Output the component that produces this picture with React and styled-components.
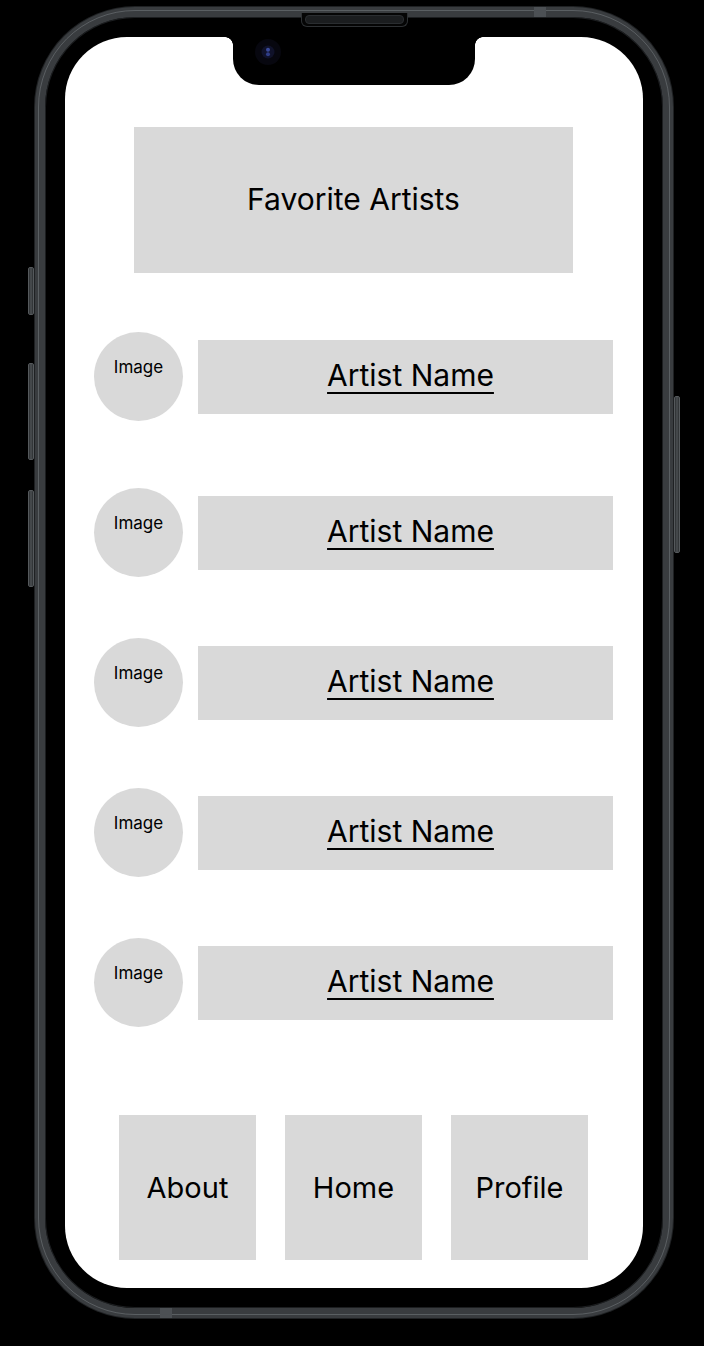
import React from 'react';
import styled, { createGlobalStyle } from 'styled-components';

const GlobalStyle = createGlobalStyle`
  html, body {
    margin: 0;
    padding: 0;
    background: #000;
  }
  * {
    box-sizing: border-box;
  }
  body {
    font-family: Inter, "Noto Sans", "Liberation Sans", sans-serif;
    color: #000;
  }
`;

const Page = styled.div`
  width: 704px;
  height: 1346px;
  background: #000;
  padding: 7px 0 0 35px;
  overflow: hidden;
`;

const Phone = styled.div`
  position: relative;
  width: 638px;
  height: 1311px;
  border: 10px solid #393c3f;
  border-radius: 100px;
  padding: 20px;
  background: #000;
  box-shadow: 0 0 0 1px #1f2123, inset 0 0 0 1px #1c1e20;

  &::before {
    content: '';
    position: absolute;
    inset: -7px;
    border-radius: 97px;
    border: 1.5px solid rgba(118, 123, 128, 0.55);
    pointer-events: none;
  }
`;

const SideButton = styled.div`
  position: absolute;
  width: 6px;
  border-radius: 2px;
  background: linear-gradient(90deg, #2a2d2f, #4d5154 50%, #2a2d2f);
  border: 1px solid #55595c;
  left: ${(p) => (p.$right ? '629px' : '-17px')};
  top: ${(p) => p.$top}px;
  height: ${(p) => p.$h}px;
`;

const Speaker = styled.div`
  position: absolute;
  left: 256px;
  top: -4px;
  width: 107px;
  height: 14px;
  border-radius: 0 0 6px 6px;
  background: #050505;
  border: 1px solid #2d3033;
  border-top: none;

  &::after {
    content: '';
    position: absolute;
    left: 3px;
    right: 3px;
    top: 2px;
    height: 7px;
    border-radius: 4px;
    background: #1b1d1f;
    border: 1px solid #2a2d30;
  }
`;

const Antenna = styled.div`
  position: absolute;
  width: 12px;
  height: 10px;
  background: #4c5054;
  left: ${(p) => p.$left}px;
  top: ${(p) => p.$top}px;
`;

const Screen = styled.div`
  position: relative;
  width: 578px;
  height: 1251px;
  background: #fff;
  border-radius: 62px;
  overflow: hidden;
  display: flex;
  flex-direction: column;
  align-items: flex-start;
`;

const Notch = styled.div`
  position: absolute;
  left: 168px;
  top: 0;
  width: 242px;
  height: 48px;
  background: #000;
  border-radius: 0 0 26px 26px;

  &::before,
  &::after {
    content: '';
    position: absolute;
    top: 0;
    width: 8px;
    height: 8px;
  }
  &::before {
    left: -8px;
    background: radial-gradient(circle at 0 100%, transparent 7.5px, #000 8px);
  }
  &::after {
    right: -8px;
    background: radial-gradient(circle at 100% 100%, transparent 7.5px, #000 8px);
  }
`;

const Camera = styled.svg`
  position: absolute;
  left: 21px;
  top: 1px;
`;

const Header = styled.div`
  margin: 90px 0 0 69px;
  width: 439px;
  height: 146px;
  background: #d9d9d9;
  display: flex;
  align-items: center;
  justify-content: center;
  font-size: 30px;
  padding-bottom: 2px;
`;

const ArtistList = styled.ul`
  list-style: none;
  margin: 59px 0 0;
  padding: 0 30px 0 29px;
  width: 100%;
  display: flex;
  flex-direction: column;
  gap: 61px;
`;

const ArtistRow = styled.li`
  display: flex;
  align-items: center;
  gap: 15px;

  &:first-child {
    margin-bottom: 6px;
  }
`;

const Avatar = styled.div`
  flex: none;
  width: 89px;
  height: 89px;
  border-radius: 50%;
  background: #d9d9d9;
  display: flex;
  justify-content: center;
  padding-top: 24px;
  font-size: 17px;
  line-height: 22px;
`;

const NameBox = styled.div`
  flex: 1;
  height: 74px;
  background: #d9d9d9;
  display: flex;
  align-items: center;
  justify-content: center;
  padding: 0 0 3px 10px;
`;

const NameLink = styled.a`
  color: #000;
  font-size: 30px;
  text-decoration: underline;
  text-decoration-thickness: 2px;
  text-underline-offset: 6px;
  cursor: pointer;
`;

const Nav = styled.nav`
  margin-top: 88px;
  width: 100%;
  display: flex;
  justify-content: flex-start;
  padding-left: 54px;
  gap: 29px;
`;

const NavButton = styled.button`
  width: 137px;
  height: 145px;
  border: none;
  background: #d9d9d9;
  font-family: inherit;
  font-size: 29px;
  color: #000;
  padding: 0;
  cursor: pointer;
`;

const artists = [1, 2, 3, 4, 5];

export default function App() {
  return (
    <>
      <GlobalStyle />
      <Page>
        <Phone>
          <SideButton $top={250} $h={48} />
          <SideButton $top={346} $h={97} />
          <SideButton $top={473} $h={97} />
          <SideButton $right $top={379} $h={157} />
          <Speaker />
          <Antenna $left={489} $top={-10} />
          <Antenna $left={115} $top={1291} />
          <Screen>
            <Notch>
              <Camera width="28" height="28" viewBox="0 0 28 28">
                <circle cx="14" cy="14" r="13" fill="#07070f" />
                <circle cx="14" cy="14" r="6.5" fill="#10122a" />
                <circle cx="14" cy="11.8" r="2" fill="#3a4a9a" />
                <circle cx="14" cy="16.2" r="2" fill="#2f3d85" />
              </Camera>
            </Notch>
            <Header>Favorite Artists</Header>
            <ArtistList>
              {artists.map((n) => (
                <ArtistRow key={n}>
                  <Avatar>Image</Avatar>
                  <NameBox>
                    <NameLink>Artist Name</NameLink>
                  </NameBox>
                </ArtistRow>
              ))}
            </ArtistList>
            <Nav>
              <NavButton>About</NavButton>
              <NavButton>Home</NavButton>
              <NavButton>Profile</NavButton>
            </Nav>
          </Screen>
        </Phone>
      </Page>
    </>
  );
}
